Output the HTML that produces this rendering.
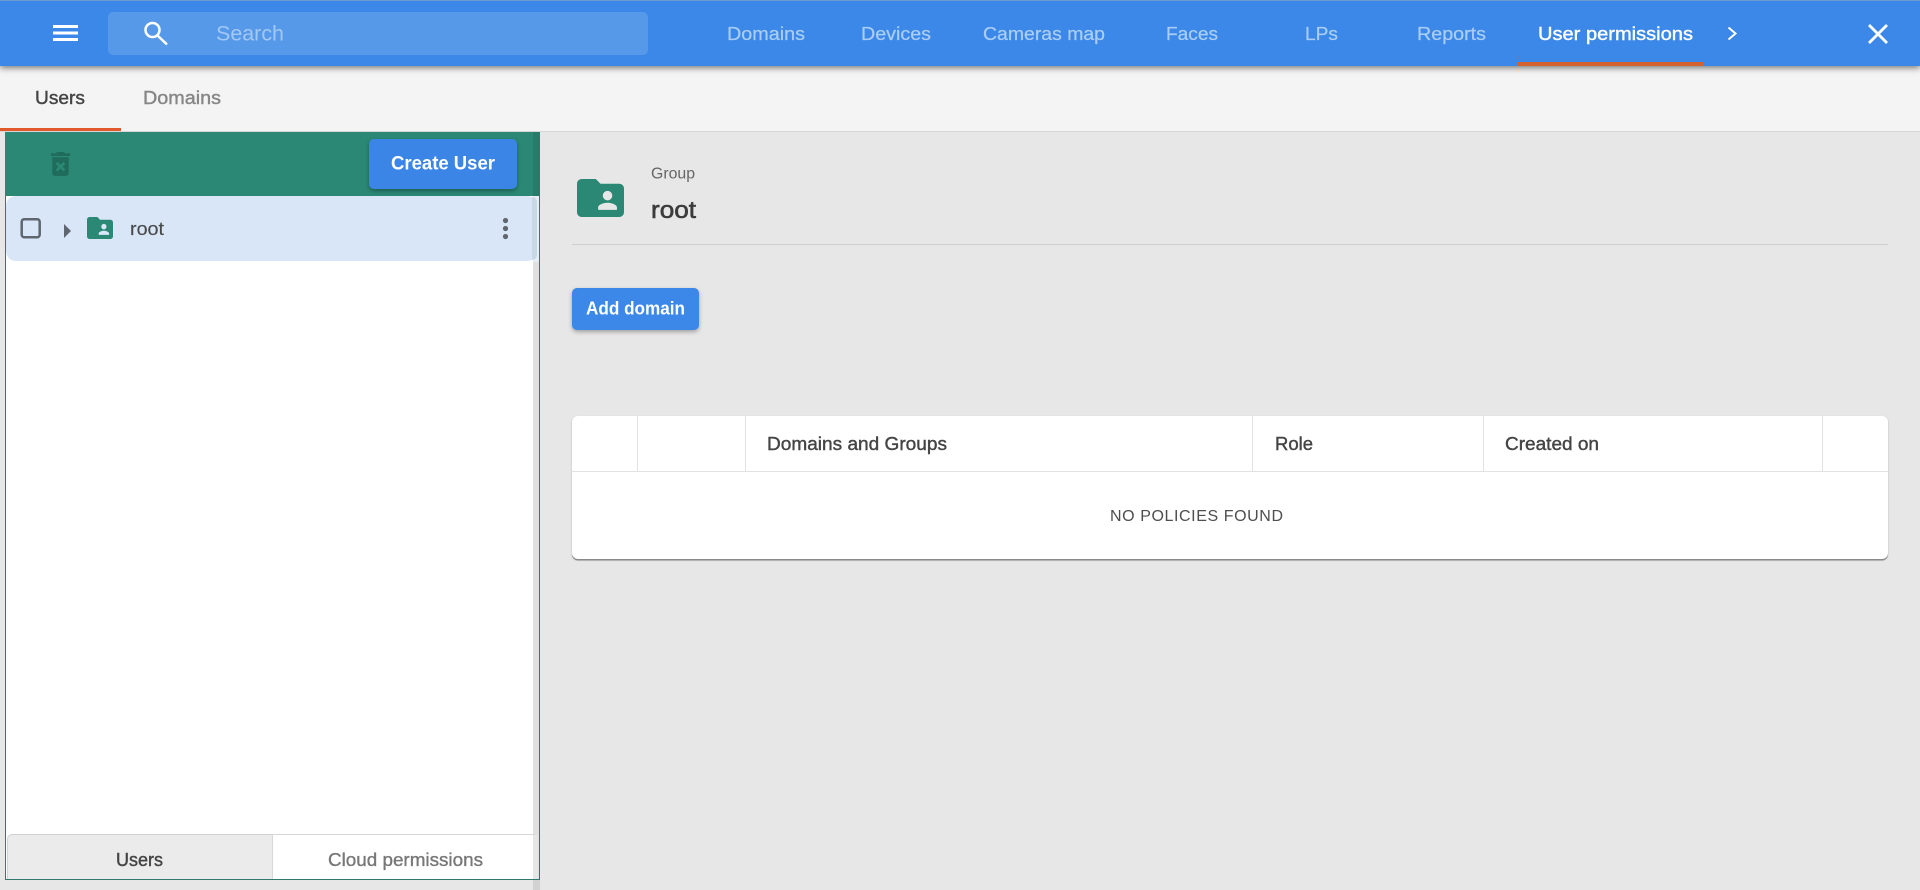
<!DOCTYPE html>
<html lang="en">
<head>
<meta charset="utf-8">
<title>User permissions</title>
<style>
html,body{margin:0;padding:0;width:1920px;height:890px;overflow:hidden;background:#e7e7e7;font-family:"Liberation Sans",sans-serif}
.b{position:absolute;box-sizing:border-box}
svg{position:absolute;left:0;top:0}
text{font-family:"Liberation Sans",sans-serif}
.m{font-size:18px;fill:#a9cdf6;stroke:#a9cdf6;stroke-width:.25}
.d{font-size:18px;fill:#444;stroke:#444;stroke-width:.4}
</style>
</head>
<body>
<div class="b" style="left:0;top:66px;width:1920px;height:66px;background:#f4f4f4;border-bottom:1px solid #d6d6d6"></div>
<div class="b" style="left:0;top:128px;width:121px;height:3px;background:#e0592a"></div>
<div class="b" style="left:0;top:0;width:1920px;height:66px;background:#3b88e8;border-top:1px solid #6d9bd0;box-shadow:0 2px 6px rgba(0,0,0,.5)"></div>
<div class="b" style="left:108px;top:12px;width:540px;height:43px;background:#5799e9;border-radius:5px"></div>
<div class="b" style="left:1517px;top:62px;width:187px;height:4px;background:#d4622f"></div>

<!-- left panel -->
<div class="b" style="left:533px;top:196px;width:7px;height:694px;background:#d2d2d2"></div>
<div class="b" style="left:5px;top:132px;width:535px;height:748px;background:#fff;border:1px solid #33796f;border-top:0"></div>
<div class="b" style="left:533px;top:262px;width:6px;height:617px;background:#e0e0e0"></div>
<div class="b" style="left:5px;top:132px;width:535px;height:64px;background:#2b8874"></div>
<div class="b" style="left:533px;top:132px;width:7px;height:64px;background:#267b69"></div>
<div class="b" style="left:533px;top:196px;width:6px;height:66px;background:#e6edf5"></div>
<div class="b" style="left:6px;top:196px;width:531px;height:65px;background:#d8e6f8;border-radius:10px"></div>
<div class="b" style="left:532px;top:197px;width:5px;height:63px;background:#c9d7e7;border-radius:0 8px 8px 0"></div>
<div class="b" style="left:369px;top:139px;width:148px;height:50px;background:#3b85e6;border-radius:5px;box-shadow:0 2px 4px rgba(0,0,0,.3)"></div>
<div class="b" style="left:7px;top:834px;width:266px;height:45px;background:#ebebeb;border:1px solid #d2d2d2;border-bottom:0;border-radius:5px 0 0 0"></div>
<div class="b" style="left:272px;top:834px;width:266px;height:45px;background:#fff;border:1px solid #d8d8d8;border-bottom:0;border-radius:0 5px 0 0"></div>
<div class="b" style="left:533px;top:835px;width:5px;height:44px;background:#e6e6e6"></div>

<!-- right -->
<div class="b" style="left:572px;top:244px;width:1316px;height:1px;background:#cfcfcf"></div>
<div class="b" style="left:572px;top:288px;width:127px;height:42px;background:#3b88e8;border-radius:5px;box-shadow:0 2px 4px rgba(0,0,0,.3)"></div>
<div class="b" style="left:572px;top:416px;width:1316px;height:143px;background:#fff;border-radius:6px;box-shadow:0 1px 1px 1px rgba(0,0,0,.08),0 1.5px 0 rgba(0,0,0,.35)"></div>
<div class="b" style="left:572px;top:471px;width:1316px;height:1px;background:#e2e2e2"></div>
<div class="b" style="left:637px;top:416px;width:1px;height:55px;background:#e2e2e2"></div>
<div class="b" style="left:745px;top:416px;width:1px;height:55px;background:#e2e2e2"></div>
<div class="b" style="left:1252px;top:416px;width:1px;height:55px;background:#e2e2e2"></div>
<div class="b" style="left:1483px;top:416px;width:1px;height:55px;background:#e2e2e2"></div>
<div class="b" style="left:1822px;top:416px;width:1px;height:55px;background:#e2e2e2"></div>

<svg width="1920" height="890" viewBox="0 0 1920 890" xmlns="http://www.w3.org/2000/svg">
  <!-- hamburger -->
  <path d="M53 26.500H78M53 33H78M53 39.500H78" stroke="#fff" stroke-width="3" fill="none"/>
  <!-- search -->
  <circle cx="152.500" cy="30" r="7" stroke="#fff" stroke-width="2.500" fill="none"/>
  <path d="M157.500 35.500L167 44.500" stroke="#fff" stroke-width="2.500" fill="none"/>
  <text x="216" y="40.500" font-size="21" fill="#a3c8f4" textLength="68" lengthAdjust="spacingAndGlyphs">Search</text>

  <text class="m" x="727" y="40" textLength="78" lengthAdjust="spacingAndGlyphs">Domains</text>
  <text class="m" x="861" y="40" textLength="70" lengthAdjust="spacingAndGlyphs">Devices</text>
  <text class="m" x="983" y="40" textLength="122" lengthAdjust="spacingAndGlyphs">Cameras map</text>
  <text class="m" x="1166" y="40" textLength="52" lengthAdjust="spacingAndGlyphs">Faces</text>
  <text class="m" x="1305" y="40" textLength="33" lengthAdjust="spacingAndGlyphs">LPs</text>
  <text class="m" x="1417" y="40" textLength="69" lengthAdjust="spacingAndGlyphs">Reports</text>
  <text x="1538" y="40" font-size="18" fill="#fff" stroke="#fff" stroke-width=".4" textLength="155" lengthAdjust="spacingAndGlyphs">User permissions</text>
  <path d="M1728.500 27.500L1735.500 33.500L1728.500 39.500" stroke="#fff" stroke-width="2" fill="none"/>
  <path d="M1869 25L1887 43M1887 25L1869 43" stroke="#fff" stroke-width="2.800" fill="none"/>

  <text class="d" x="35" y="104" textLength="50" lengthAdjust="spacingAndGlyphs">Users</text>
  <text x="143" y="104" font-size="18" fill="#868686" stroke="#868686" stroke-width=".4" textLength="78" lengthAdjust="spacingAndGlyphs">Domains</text>

  <!-- trash -->
  <path transform="translate(44.200 148) scale(1.360 1.330)" fill="#1f6b5c" d="M6,19A2,2 0 0,0 8,21H16A2,2 0 0,0 18,19V7H6V19M8.460,11.880L9.870,10.470L12,12.590L14.120,10.470L15.530,11.880L13.410,14L15.530,16.120L14.120,17.530L12,15.410L9.870,17.530L8.460,16.120L10.590,14L8.460,11.880M15.500,4L14.500,3H9.500L8.500,4H5V6H19V4H15.500Z"/>
  <text x="391" y="169.500" font-size="19.500" font-weight="bold" fill="#fff" textLength="104" lengthAdjust="spacingAndGlyphs">Create User</text>

  <!-- tree row -->
  <rect x="21.700" y="219.200" width="18" height="18" rx="2.500" fill="none" stroke="#5f6670" stroke-width="2.500"/>
  <path d="M64 224L71 231L64 238Z" fill="#5f6670"/>
  <path transform="translate(84.400 211.500) scale(1.300 1.375)" fill="#2b8874" fill-rule="evenodd" d="M20 6h-8l-2-2H4c-1.100 0-1.990.900-1.990 2L2 18c0 1.100.900 2 2 2h16c1.100 0 2-.900 2-2V8c0-1.100-.900-2-2-2zm-5 3c1.100 0 2 .900 2 2s-.900 2-2 2-2-.900-2-2 .900-2 2-2zm4 8h-8v-1c0-1.330 2.670-2 4-2s4 .670 4 2v1z"/>
  <text x="130" y="235" font-size="18" fill="#4a4a4a" stroke="#4a4a4a" stroke-width=".15" textLength="34" lengthAdjust="spacingAndGlyphs">root</text>
  <circle cx="505.500" cy="220.500" r="2.600" fill="#5f6670"/>
  <circle cx="505.500" cy="228.500" r="2.600" fill="#5f6670"/>
  <circle cx="505.500" cy="236.500" r="2.600" fill="#5f6670"/>

  <text class="d" x="116" y="866" textLength="47" lengthAdjust="spacingAndGlyphs">Users</text>
  <text x="328" y="866" font-size="18" fill="#777" stroke="#777" stroke-width=".35" textLength="155" lengthAdjust="spacingAndGlyphs">Cloud permissions</text>

  <!-- group header -->
  <path transform="translate(572.300 169.500) scale(2.350 2.375)" fill="#2b8874" fill-rule="evenodd" d="M20 6h-8l-2-2H4c-1.100 0-1.990.900-1.990 2L2 18c0 1.100.900 2 2 2h16c1.100 0 2-.900 2-2V8c0-1.100-.900-2-2-2zm-5 3c1.100 0 2 .900 2 2s-.900 2-2 2-2-.900-2-2 .900-2 2-2zm4 8h-8v-1c0-1.330 2.670-2 4-2s4 .670 4 2v1z"/>
  <text x="651" y="178.500" font-size="16" fill="#666" textLength="44" lengthAdjust="spacingAndGlyphs">Group</text>
  <text x="651" y="218" font-size="24" fill="#3c3c3c" stroke="#3c3c3c" stroke-width=".6" textLength="45" lengthAdjust="spacingAndGlyphs">root</text>
  <text x="586" y="314.500" font-size="18" font-weight="bold" fill="#fff" textLength="99" lengthAdjust="spacingAndGlyphs">Add domain</text>

  <!-- table -->
  <text class="d" x="767" y="450" textLength="180" lengthAdjust="spacingAndGlyphs">Domains and Groups</text>
  <text class="d" x="1275" y="450" textLength="38" lengthAdjust="spacingAndGlyphs">Role</text>
  <text class="d" x="1505" y="450" textLength="94" lengthAdjust="spacingAndGlyphs">Created on</text>
  <text x="1110" y="521" font-size="16" fill="#4e4e4e" textLength="173" lengthAdjust="spacing">NO POLICIES FOUND</text>
</svg>
</body>
</html>
